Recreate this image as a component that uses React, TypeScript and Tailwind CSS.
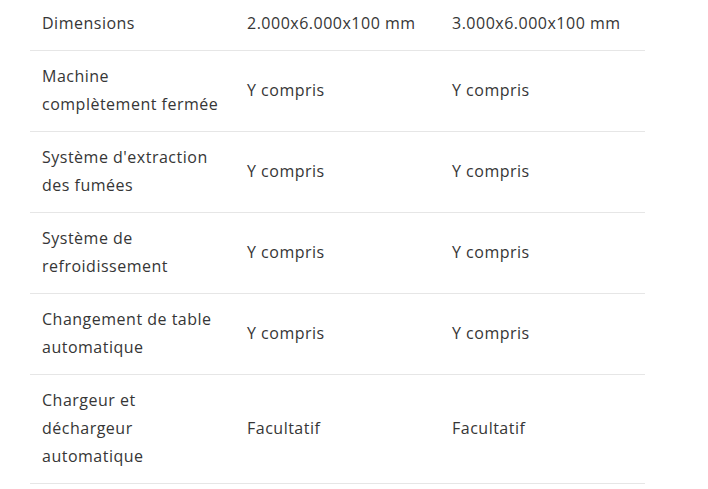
import React from 'react';

const rows: [string, string, string][] = [
  ['Dimensions', '2.000x6.000x100 mm', '3.000x6.000x100 mm'],
  ['Machine complètement fermée', 'Y compris', 'Y compris'],
  ["Système d'extraction des fumées", 'Y compris', 'Y compris'],
  ['Système de refroidissement', 'Y compris', 'Y compris'],
  ['Changement de table automatique', 'Y compris', 'Y compris'],
  ['Chargeur et déchargeur automatique', 'Facultatif', 'Facultatif'],
];

export default function App() {
  return (
    <div className="bg-white min-h-screen w-[708px] h-[489px] overflow-hidden">
      <div className="pl-[30px] -mt-[3px]">
        <table
          className="table-fixed w-[615px] border-collapse text-[16px] leading-[28px] tracking-[0.5px] text-[#363636]"
          style={{ fontFamily: '"Open Sans", Lato, sans-serif' }}
        >
          <colgroup>
            <col className="w-[205px]" />
            <col className="w-[205px]" />
            <col className="w-[205px]" />
          </colgroup>
          <tbody>
            {rows.map((r) => (
              <tr key={r[0]} className="border-y border-[#e6e6e6]">
                {r.map((c, i) => (
                  <td key={i} className="px-3 pt-[11px] pb-[13px] align-middle text-left">
                    {c}
                  </td>
                ))}
              </tr>
            ))}
          </tbody>
        </table>
      </div>
    </div>
  );
}
